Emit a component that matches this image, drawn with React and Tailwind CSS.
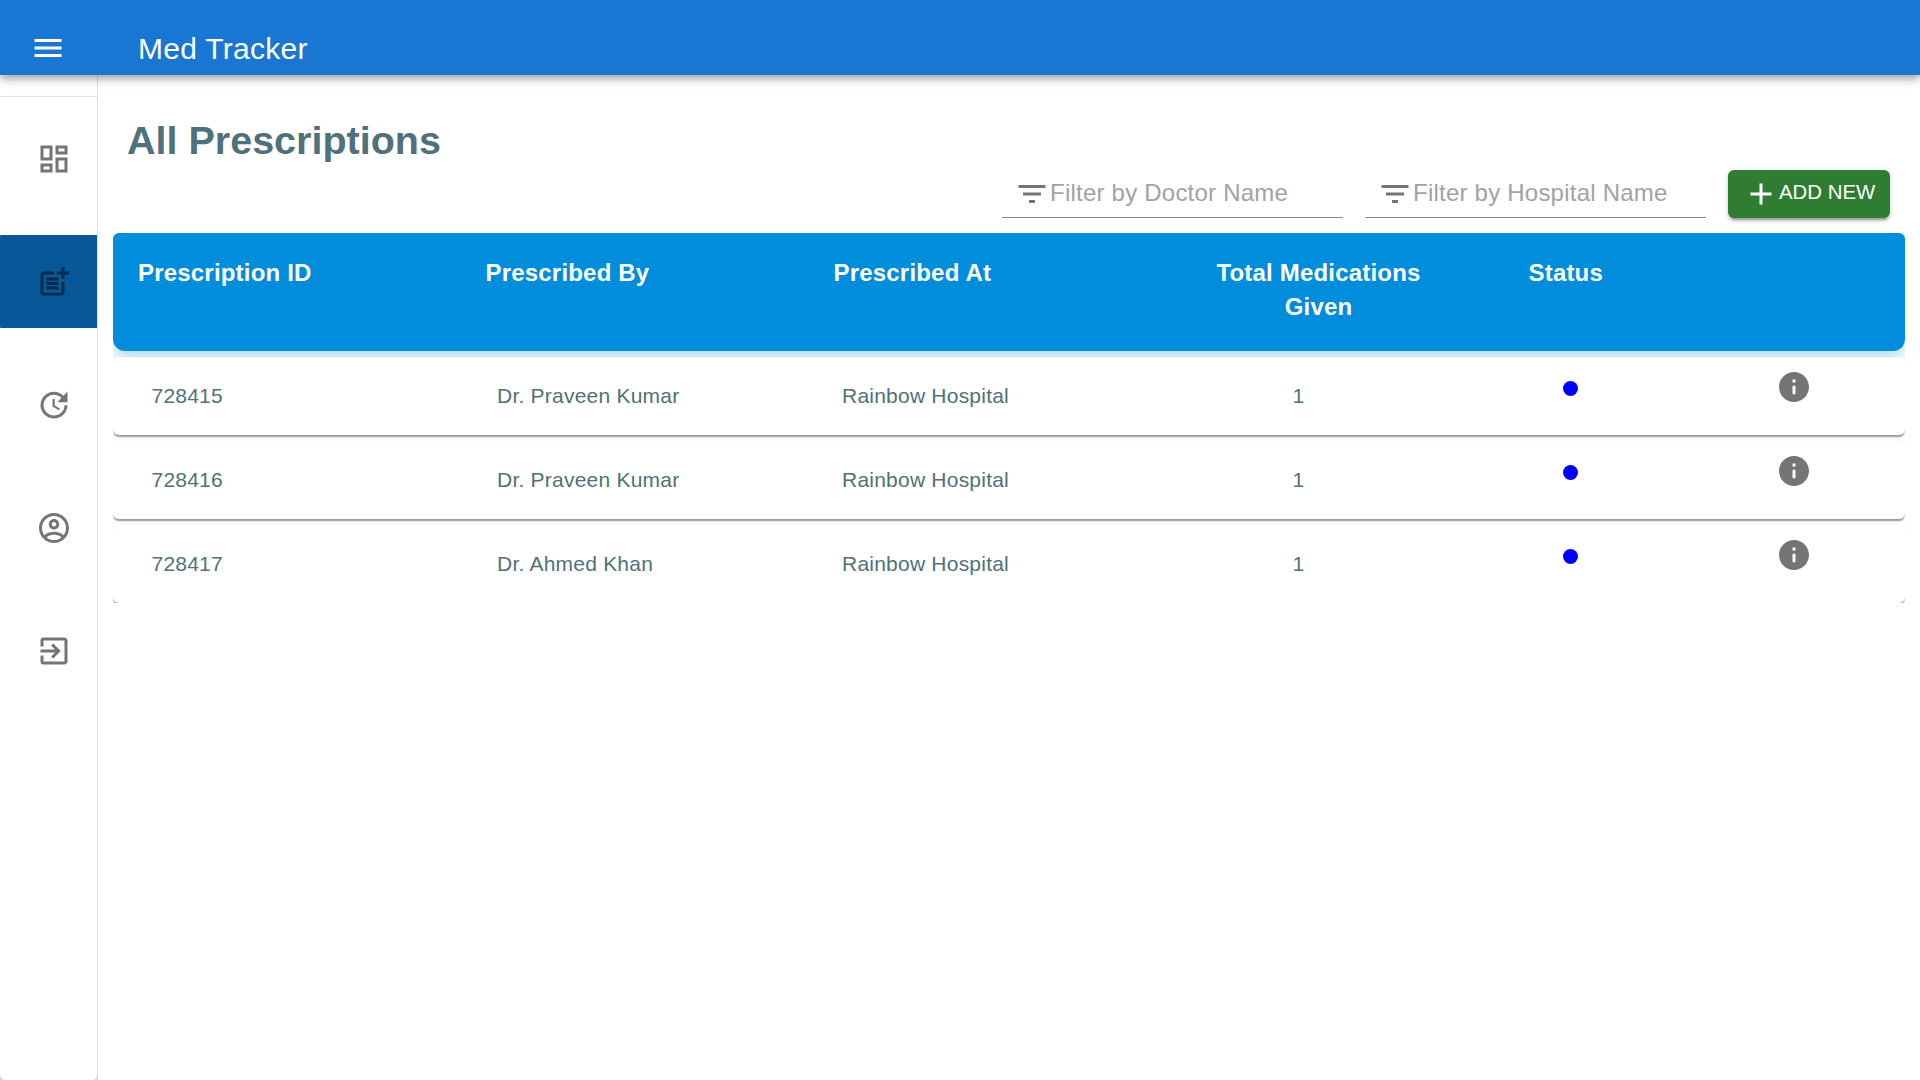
import {
  MdAdd,
  MdExitToApp,
  MdFilterList,
  MdMenu,
  MdOutlineDashboard,
  MdPostAdd,
  MdUpdate,
} from "react-icons/md";

function AccountIcon({ className }) {
  return (
    <svg viewBox="0 0 24 24" fill="currentColor" className={className}>
      <path d="M12 2C6.48 2 2 6.48 2 12s4.48 10 10 10 10-4.48 10-10S17.52 2 12 2zM7.07 18.28c.43-.9 3.05-1.78 4.93-1.78s4.51.88 4.93 1.78C15.57 19.36 13.86 20 12 20s-3.57-.64-4.93-1.72zm11.29-1.45c-1.43-1.74-4.9-2.33-6.36-2.33s-4.93.59-6.36 2.33C4.62 15.49 4 13.82 4 12c0-4.41 3.59-8 8-8s8 3.59 8 8c0 1.82-.62 3.49-1.64 4.83zM12 6c-1.94 0-3.5 1.56-3.5 3.5S10.06 13 12 13s3.5-1.56 3.5-3.5S13.94 6 12 6zm0 5c-.83 0-1.5-.67-1.5-1.5S11.17 8 12 8s1.5.67 1.5 1.5S12.83 11 12 11z" />
    </svg>
  );
}

const navItems = [
  { id: "dashboard", Icon: MdOutlineDashboard },
  { id: "prescriptions", Icon: MdPostAdd, active: true },
  { id: "history", Icon: MdUpdate },
  { id: "account", Icon: AccountIcon },
  { id: "logout", Icon: MdExitToApp },
];

const prescriptions = [
  { id: "728415", doctor: "Dr. Praveen Kumar", hospital: "Rainbow Hospital", total: 1 },
  { id: "728416", doctor: "Dr. Praveen Kumar", hospital: "Rainbow Hospital", total: 1 },
  { id: "728417", doctor: "Dr. Ahmed Khan", hospital: "Rainbow Hospital", total: 1 },
];

function InfoIcon() {
  return (
    <svg viewBox="0 0 24 24" className="size-9 fill-[#757575]">
      <path d="M12 2C6.48 2 2 6.48 2 12s4.48 10 10 10 10-4.48 10-10S17.52 2 12 2zm0 15c-.55 0-1-.45-1-1v-4c0-.55.45-1 1-1s1 .45 1 1v4c0 .55-.45 1-1 1zm1-8h-2V7h2v2z" />
    </svg>
  );
}

function TopBar() {
  return (
    <header className="relative z-10 flex h-[75px] items-center bg-[#1976d2] pt-[21px] text-white shadow-[0_3px_6px_-1.5px_rgba(0,0,0,0.2),0_6px_7.5px_0_rgba(0,0,0,0.14),0_1.5px_15px_0_rgba(0,0,0,0.12)]">
      <button className="ml-[30px]">
        <MdMenu className="size-9" />
      </button>
      <div className="mt-[2px] ml-[72px] text-[30px] leading-[48px] tracking-[0.009em]">
        Med Tracker
      </div>
    </header>
  );
}

function Sidebar() {
  return (
    <aside className="w-[98px] shrink-0 bg-[#dcdcdc]">
      <div className="flex h-full flex-col rounded-b-[6px] border-r border-[#e0e0e0] bg-white">
        <div className="h-[22px] border-b border-[#e0e0e0]" />
        <nav className="flex flex-col gap-[30px] pt-[15px]">
          {navItems.map(({ id, Icon, active }) => (
            <button
              key={id}
              className={
                active
                  ? "flex h-[93px] items-center rounded-l-[1px] bg-[#085799] pl-9 text-[#04294a]"
                  : "flex h-[93px] items-center pl-9 text-[#757575]"
              }
            >
              <Icon className="size-9" />
            </button>
          ))}
        </nav>
      </div>
    </aside>
  );
}

function FilterField({ placeholder }) {
  return (
    <label className="flex h-12 w-[341px] items-center border-b border-[#8c8c8c] pl-3">
      <MdFilterList className="size-9 shrink-0 text-[#757575]" />
      <input
        placeholder={placeholder}
        className="mb-[2px] w-full min-w-0 bg-transparent text-[24px] leading-[34px] tracking-[0.00938em] outline-none placeholder:text-[#a2a2a2]"
      />
    </label>
  );
}

function Table() {
  return (
    <section className="ml-[15px] flex w-[1792px] flex-col gap-[6px] overflow-hidden">
      <div className="grid h-[118px] grid-cols-[347.5px_348px_348.5px_273px_1fr] rounded-t-[6px] rounded-b-[12px] bg-[#008ddc] pt-[23px] pl-[25px] text-[24px] leading-[34.3px] font-bold tracking-[0.008em] text-white shadow-[0_6px_15px_rgba(0,141,220,0.32)]">
        <div>Prescription ID</div>
        <div>Prescribed By</div>
        <div>Prescribed At</div>
        <div className="text-center">
          Total Medications
          <br />
          Given
        </div>
        <div className="pl-[73.5px]">Status</div>
      </div>
      {prescriptions.map((row) => (
        <div
          key={row.id}
          className="grid h-[78px] grid-cols-[345.5px_345px_450.5px_270.5px_213px_1fr] items-start rounded-[6px] bg-white pl-[38.5px] text-[21px] leading-[30px] tracking-[0.01071em] text-[#4f717b] shadow-[0_3px_1.5px_-1.5px_rgba(0,0,0,0.22),0_1.5px_1.5px_0_rgba(0,0,0,0.17),0_1.5px_4.5px_0_rgba(0,0,0,0.07)]"
        >
          <div className="pt-6">{row.id}</div>
          <div className="pt-6">{row.doctor}</div>
          <div className="pt-6">{row.hospital}</div>
          <div className="pt-6">{row.total}</div>
          <div className="mt-6 size-[15px] rounded-full bg-[#0000ff]" />
          <button className="mt-3 size-9">
            <InfoIcon />
          </button>
        </div>
      ))}
    </section>
  );
}

export default function App() {
  return (
    <div className="flex h-screen flex-col overflow-hidden bg-white font-['Liberation_Sans',Arial,sans-serif]">
      <TopBar />
      <div className="flex min-h-0 flex-1">
        <Sidebar />
        <main className="flex-1">
          <h1 className="mt-[41px] ml-[29px] text-[39.5px] leading-[48px] font-bold text-[#4f717b]">
            All Prescriptions
          </h1>
          <div className="mt-[6px] mr-[30px] mb-[15px] flex justify-end gap-[22px]">
            <FilterField placeholder="Filter by Doctor Name" />
            <FilterField placeholder="Filter by Hospital Name" />
            <button className="flex h-12 w-[162px] items-center rounded-[6px] bg-[#2e7d32] pl-[15px] text-[20.4px] whitespace-nowrap text-white shadow-[0_4.5px_1.5px_-3px_rgba(0,0,0,0.2),0_3px_3px_0_rgba(0,0,0,0.14),0_1.5px_7.5px_0_rgba(0,0,0,0.12)]">
              <MdAdd className="size-9 shrink-0" />
              <span className="mb-[3px]">ADD NEW</span>
            </button>
          </div>
          <Table />
        </main>
      </div>
    </div>
  );
}
